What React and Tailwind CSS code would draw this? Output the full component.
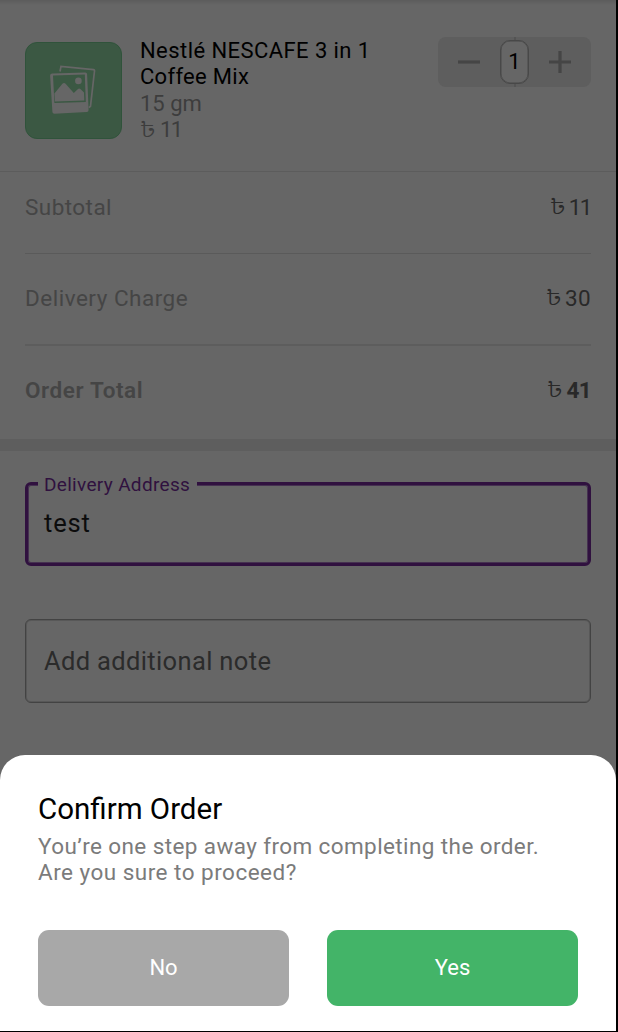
function Taka() {
  return <span className="inline-block w-[14px] shrink-0 origin-left translate-x-[-1px] translate-y-[2px] scale-x-[1.4] font-['Noto_Sans_Bengali','Noto_Sans','DejaVu_Sans',sans-serif] text-[21px] font-light tracking-normal">৳</span>;
}

function PhotoIcon() {
  return (
    <svg className="mr-px mb-px" width="46" height="50" viewBox="0 0 46 50" fill="none">
      <path d="M10 6.5 11 1.4 43.5 4.6Q44.7 4.8 44.5 6L40.5 41.2 38.8 42.6" stroke="#666" strokeWidth="1.7" />
      <path fillRule="evenodd" fill="#666" d="M2.2 8.4 35.2 7.4Q37 7.4 37.1 9L38.6 45Q38.6 47 36.8 47.1L4.4 48.7Q2.5 48.7 2.4 47L.1 10.4Q.2 8.5 2.2 8.4ZM3 10.4 4.4 38 35.8 37 34.8 9.4Z" />
      <path fill="#666" d="M4.4 28.5 12.4 18.8Q14 17.2 15.6 18.8L23.8 28 28 24Q29.2 23 30.4 24L34 27.5 34.3 35.6 4.9 36.4Z" />
      <circle cx="28.4" cy="15.9" r="3.3" fill="#666" />
    </svg>
  );
}

function Stepper() {
  return (
    <div className="relative flex h-[50px] w-[153px] items-center justify-between rounded-[8px] bg-[#5e5e5e] pl-5 pr-5">
      <svg width="22" height="22" viewBox="0 0 22 22"><path d="M0 11H22" stroke="#454545" strokeWidth="3.2" /></svg>
      <div className="absolute left-[76px] top-0 h-[50px] w-[2px] bg-[#545454]" />
      <div className="absolute left-[62px] top-[3px] flex h-[44px] w-[29px] items-center justify-center rounded-[10px] border border-[#484848] bg-[#666] pb-[2px] text-[22px] text-black shadow-[inset_0_0_0_0.5px_#484848]">1</div>
      <svg width="22" height="22" viewBox="0 0 22 22"><path d="M0 11H22M11 0V22" stroke="#454545" strokeWidth="3.2" /></svg>
    </div>
  );
}

function Row({ label, amount, className, labelClass, amountClass }) {
  return (
    <div className={`mx-[25px] flex items-center justify-between pb-[2px] text-[22.5px] leading-[26px] ${className}`}>
      <span className={`text-[#454545] ${labelClass}`}>{label}</span>
      <span className="flex gap-[5px] text-[#292929]">
        <Taka />
        <span className={amountClass}>{amount}</span>
      </span>
    </div>
  );
}

export default function App() {
  return (
    <div className="h-[1032px] w-[618px] overflow-hidden bg-black font-[Roboto,sans-serif]">
      <div className="flex h-[1031px] w-[616px] flex-col bg-[#666]">
        <div className="h-[5px] shrink-0 bg-linear-to-b from-[#5c5c5c] to-[#666]" />
        <section className="flex h-[167px] shrink-0 items-start border-b border-[#5c5c5c] pl-[25px] pr-[25px] pt-8">
          <div className="mt-[5px] flex size-[97px] items-center justify-center rounded-[12px] border border-[#30533b] bg-[#3b5843]">
            <PhotoIcon />
          </div>
          <div className="ml-[18px] w-[270px] pt-px text-[22px] leading-[26.4px] text-[#3d3d3d]">
            <p className="tracking-[0.43px] text-black">Nestlé NESCAFE 3 in 1<br /><span className="tracking-[0.3px]">Coffee Mix</span></p>
            <p>15 gm</p>
            <p className="flex gap-[6px]"><Taka /><span className="tracking-[-1.5px]">11</span></p>
          </div>
          <div className="ml-auto"><Stepper /></div>
        </section>
        <Row label="Subtotal" amount="11" className="h-[72px]" labelClass="tracking-[0.45px]" amountClass="tracking-[-1.5px]" />
        <div className="mx-[25px] mt-[9px] h-px shrink-0 bg-[#5a5a5a]" />
        <Row label="Delivery Charge" amount="30" className="h-[90px]" labelClass="tracking-[0.5px]" amountClass="tracking-[0.3px]" />
        <div className="mx-[25px] h-[2px] shrink-0 bg-[#5d5d5d]" />
        <Row label="Order Total" amount="41" className="h-[89px]" labelClass="font-semibold tracking-[0.6px]" amountClass="font-bold tracking-[-0.6px]" />
        <div className="mt-[4px] h-[12px] shrink-0 bg-[#5e5e5e]" />
        <div className="relative mx-[25px] mt-[31px] flex h-[84px] shrink-0 items-center rounded-[6px] border-[3px] border-[#30113f] pb-[2px] pl-4 text-[25.5px] tracking-[0.8px] text-[#0c0c0c] shadow-[inset_0_0_0_1px_#453150]">
          <span className="absolute -top-[10px] left-[10px] w-[159px] bg-[#666] pl-[6px] text-[19px] leading-5 tracking-[0.32px] text-[#30113f]">Delivery Address</span>
          test
        </div>
        <div className="mx-[25px] mt-[53px] flex h-[84px] shrink-0 items-center rounded-[6px] border border-[#434343] pl-[18px] text-[25.5px] tracking-[0.35px] text-[#2b2b2b] shadow-[inset_0_0_0_1px_#585858]">
          Add additional note
        </div>
        <section className="mt-[52px] flex flex-1 flex-col rounded-t-[25px] bg-white px-[38px] pt-[36px]">
          <h2 className="text-[29.5px] leading-9 text-black">Confirm Order</h2>
          <p className="mt-[6px] whitespace-nowrap text-[22.5px] leading-[26px] tracking-[0.4px] text-[#7b7b7b]">You’re one step away from completing the order.<br /><span className="tracking-[0.48px]">Are you sure to proceed?</span></p>
          <div className="mt-[45px] grid grid-cols-2 gap-[38px] text-[22px] text-white">
            <button className="h-[76px] rounded-[11px] bg-[#a8a8a8] pb-[2px]">No</button>
            <button className="h-[76px] rounded-[11px] bg-[#43b468] pb-[2px]">Yes</button>
          </div>
        </section>
      </div>
    </div>
  );
}
